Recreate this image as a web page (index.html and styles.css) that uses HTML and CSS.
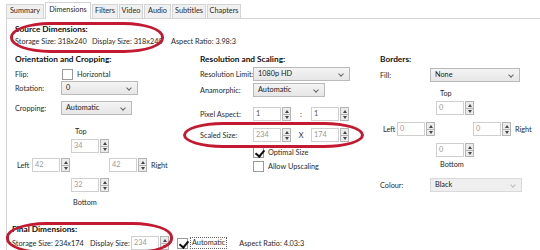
FILE: index.html
```html
<!DOCTYPE html>
<html lang="en">
<head>
  <meta charset="UTF-8">
  <title>Dimensions</title>
  <link rel="stylesheet" href="styles.css">
</head>
<body>
  <div class="page">
    <div class="tabs">
      <span class="tab tab-summary">Summary</span>
      <span class="tab tab-dimensions active">Dimensions</span>
      <span class="tab tab-filters">Filters</span>
      <span class="tab tab-video">Video</span>
      <span class="tab tab-audio">Audio</span>
      <span class="tab tab-subtitles">Subtitles</span>
      <span class="tab tab-chapters">Chapters</span>
    </div>

    <div class="panel">
      <section class="source">
        <h2>Source Dimensions:</h2>
        <div class="info">
          <span class="info-storage">Storage Size: 318x240</span>
          <span class="info-display">Display Size: 318x240</span>
          <span>Aspect Ratio: 3.98:3</span>
        </div>
      </section>

      <div class="columns">
        <section class="col col-orient">
          <h2>Orientation and Cropping:</h2>
          <div class="row row-flip">
            <span class="label">Flip:</span>
            <span class="check"></span>
            <span class="check-text">Horizontal</span>
          </div>
          <div class="row row-rotation">
            <span class="label">Rotation:</span>
            <span class="select select-rotation">0</span>
          </div>
          <div class="row row-cropping">
            <span class="label">Cropping:</span>
            <span class="select select-crop">Automatic</span>
          </div>
          <div class="crop">
            <div class="crop-top-label">Top</div>
            <div class="spin crop-top"><span class="spin-box">34</span><span class="spin-btns"><i class="up"></i><i class="down"></i></span></div>
            <div class="crop-mid">
              <span class="side-label">Left</span>
              <div class="spin spin-left"><span class="spin-box">42</span><span class="spin-btns"><i class="up"></i><i class="down"></i></span></div>
              <div class="spin spin-right"><span class="spin-box">42</span><span class="spin-btns"><i class="up"></i><i class="down"></i></span></div>
              <span class="side-label side-right">Right</span>
            </div>
            <div class="spin crop-bottom"><span class="spin-box">32</span><span class="spin-btns"><i class="up"></i><i class="down"></i></span></div>
            <div class="crop-bottom-label">Bottom</div>
          </div>
        </section>

        <section class="col col-res">
          <h2>Resolution and Scaling:</h2>
          <div class="row row-limit">
            <span class="label label-wide">Resolution Limit:</span>
            <span class="select select-limit">1080p HD</span>
          </div>
          <div class="row row-anam">
            <span class="label label-wide">Anamorphic:</span>
            <span class="select select-anam">Automatic</span>
          </div>
          <div class="row row-pixel">
            <span class="label label-wide">Pixel Aspect:</span>
            <div class="spin"><span class="spin-box dark">1</span><span class="spin-btns"><i class="up"></i><i class="down"></i></span></div>
            <span class="sep">:</span>
            <div class="spin"><span class="spin-box dark">1</span><span class="spin-btns"><i class="up"></i><i class="down"></i></span></div>
          </div>
          <div class="row row-scaled">
            <span class="label label-wide">Scaled Size:</span>
            <div class="spin"><span class="spin-box">234</span><span class="spin-btns"><i class="up"></i><i class="down"></i></span></div>
            <span class="sep">X</span>
            <div class="spin"><span class="spin-box">174</span><span class="spin-btns"><i class="up"></i><i class="down"></i></span></div>
          </div>
          <div class="row row-optimal">
            <span class="check checked"></span>
            <span class="check-text">Optimal Size</span>
          </div>
          <div class="row row-upscale">
            <span class="check"></span>
            <span class="check-text">Allow Upscaling</span>
          </div>
        </section>

        <section class="col col-borders">
          <h2>Borders:</h2>
          <div class="row row-fill">
            <span class="label label-fill">Fill:</span>
            <span class="select select-fill">None</span>
          </div>
          <div class="crop crop-borders">
            <div class="crop-top-label">Top</div>
            <div class="spin crop-top"><span class="spin-box">0</span><span class="spin-btns"><i class="up"></i><i class="down"></i></span></div>
            <div class="crop-mid">
              <span class="side-label">Left</span>
              <div class="spin spin-left"><span class="spin-box">0</span><span class="spin-btns"><i class="up"></i><i class="down"></i></span></div>
              <div class="spin spin-right"><span class="spin-box">0</span><span class="spin-btns"><i class="up"></i><i class="down"></i></span></div>
              <span class="side-label side-right">Right</span>
            </div>
            <div class="spin crop-bottom"><span class="spin-box">0</span><span class="spin-btns"><i class="up"></i><i class="down"></i></span></div>
            <div class="crop-bottom-label">Bottom</div>
          </div>
          <div class="row row-colour">
            <span class="label label-fill">Colour:</span>
            <span class="select select-colour disabled">Black</span>
          </div>
        </section>
      </div>

      <section class="final">
        <h2>Final Dimensions:</h2>
        <div class="final-row">
          <span class="final-storage">Storage Size: 234x174</span>
          <span class="final-display">Display Size:</span>
          <div class="spin"><span class="spin-box">234</span><span class="spin-btns"><i class="up"></i><i class="down"></i></span></div>
          <span class="check checked final-check"></span>
          <span class="check-text focus">Automatic</span>
          <span class="final-aspect">Aspect Ratio: 4.03:3</span>
        </div>
      </section>
    </div>

    <!-- hand-drawn annotations -->
    <div class="mark mark-source"></div>
    <div class="mark mark-scaled"></div>
    <div class="mark mark-final"></div>
  </div>
</body>
</html>
```

FILE: styles.css
```css
* {
  box-sizing: border-box;
}
body {
  margin: 0;
  background: #ffffff;
  font-family: Lato, "Open Sans", sans-serif;
  font-size: 7.3px;
  color: #2a2a2a;
  white-space: nowrap;
  overflow: hidden;
}
h2 {
  margin: 0;
  font-size: 8.3px;
  line-height: 12px;
  font-weight: 700;
  color: #111;
}
.page {
  position: relative;
  width: 540px;
  height: 250px;
  overflow: hidden;
}

/* tabs */
.tabs {
  display: flex;
  align-items: flex-end;
  height: 19px;
  margin-left: 6px;
  border-bottom: 1px solid #d4d4d4;
}
.tab {
  height: 14px;
  line-height: 12px;
  text-align: center;
  border: 1px solid #d4d4d4;
  border-bottom: none;
  background: #f0f0f0;
  color: #2a2a2a;
}
.tab + .tab {
  margin-left: 1px;
}
.tab.active {
  position: relative;
  height: 17px;
  margin-bottom: -1px;
  line-height: 13px;
  background: #fff;
  z-index: 1;
}
.tab-summary { width: 38px; }
.tab-dimensions { width: 46px; }
.tab-filters { width: 26px; }
.tab-video { width: 24px; }
.tab-audio { width: 27px; }
.tab-subtitles { width: 34px; }
.tab-chapters { width: 34px; }

/* panel */
.panel {
  margin-left: 6px;
  border-left: 1px solid #d4d4d4;
  padding: 4px 0 0 8px;
  height: 231px;
}
.info {
  display: flex;
  line-height: 12px;
  margin-top: 1px;
}
.info-storage {
  width: 77px;
}
.info-display {
  width: 79px;
}

.columns {
  display: flex;
  height: 170px;
  margin-top: 5px;
}
.col-orient {
  width: 185px;
}
.col-res {
  width: 180px;
}
.col-borders {
  flex: 1;
}

.row {
  display: flex;
  align-items: center;
  height: 14px;
}
.label {
  width: 46px;
}
.label-wide {
  width: 53px;
}
.label-fill {
  width: 50px;
}

/* controls */
.select {
  position: relative;
  height: 14px;
  line-height: 12px;
  padding-left: 4px;
  border: 1px solid #b9b9b9;
  background: linear-gradient(#f4f4f4, #e6e6e6);
  color: #1a1a1a;
}
.select::after {
  content: "";
  position: absolute;
  right: 6px;
  top: 4px;
  width: 3px;
  height: 3px;
  border-right: 1px solid #666;
  border-bottom: 1px solid #666;
  transform: rotate(45deg);
}
.select.disabled {
  border-color: #d9d9d9;
  background: #efefef;
}
.select.disabled::after {
  border-color: #bbb;
}
.select-rotation { width: 77px; }
.select-crop { width: 71px; }
.select-limit { width: 97px; }
.select-anam { width: 72px; }
.select-fill { width: 90px; }
.select-colour { width: 92px; }

.check {
  width: 11px;
  height: 11px;
  border: 1px solid #9a9a9a;
  background: #fff;
  position: relative;
}
.check.checked::after {
  content: "";
  position: absolute;
  left: 3px;
  top: 0px;
  width: 4px;
  height: 7px;
  border-right: 2px solid #111;
  border-bottom: 2px solid #111;
  transform: rotate(40deg);
}
.check-text {
  margin-left: 4px;
}

.spin {
  display: flex;
  height: 14px;
}
.spin-box {
  width: 28px;
  height: 14px;
  line-height: 12px;
  padding-left: 2px;
  border: 1px solid #cfcfcf;
  color: #9a9a9a;
}
.spin-box.dark {
  color: #555;
}
.spin-btns {
  display: flex;
  flex-direction: column;
  width: 9px;
  margin-left: 1px;
}
.spin-btns i {
  position: relative;
  flex: 1;
  border: 1px solid #b4b4b4;
  background: #ececec;
}
.spin-btns i + i {
  border-top: none;
}
.spin-btns i::after {
  content: "";
  position: absolute;
  left: 1.5px;
  border-left: 2.5px solid transparent;
  border-right: 2.5px solid transparent;
}
.spin-btns .up::after {
  top: 1.5px;
  border-bottom: 3px solid #444;
}
.spin-btns .down::after {
  top: 1px;
  border-top: 3px solid #444;
}

/* left column */
.row-flip {
  margin-top: 3px;
  height: 12px;
}
.row-flip .check {
  margin-left: 1px;
}
.row-rotation {
  margin-top: 1px;
}
.row-cropping {
  margin-top: 6px;
}
.crop {
  margin-top: 11px;
}
.crop-top-label {
  margin-left: 60px;
  line-height: 12px;
}
.crop .crop-top,
.crop .crop-bottom {
  margin-left: 56px;
}
.crop-top {
  margin-top: 1px;
}
.crop-mid {
  display: flex;
  align-items: center;
  margin-top: 5px;
}
.side-label {
  margin-left: 2px;
  width: 15px;
}
.spin-left {
  margin-right: 39px;
}
.side-right {
  margin-left: 4px;
}
.crop-bottom {
  margin-top: 6px;
}
.crop-bottom-label {
  margin-left: 58px;
  margin-top: 5px;
  line-height: 12px;
}

/* middle column */
.row-limit {
  margin-top: 2px;
}
.row-anam {
  margin-top: 2px;
}
.row-pixel {
  margin-top: 10px;
}
.row-scaled {
  margin-top: 7px;
}
.sep {
  width: 20px;
  text-align: center;
}
.row-optimal {
  margin-top: 5px;
  padding-left: 53px;
  height: 11px;
}
.row-upscale {
  margin-top: 3px;
  padding-left: 53px;
  height: 11px;
}

/* right column */
.row-fill {
  margin-top: 3px;
}
.crop-borders {
  margin-top: 6px;
}
.crop-borders .crop-top-label {
  margin-left: 60px;
}
.crop-borders .crop-top,
.crop-borders .crop-bottom {
  margin-left: 56px;
}
.crop-borders .crop-mid {
  margin-top: 7px;
}
.crop-borders .side-label {
  margin-left: 3px;
  width: 14px;
}
.crop-borders .spin-left {
  margin-right: 38px;
}
.crop-borders .side-right {
  margin-left: 4px;
}
.crop-borders .crop-bottom {
  margin-top: 7px;
}
.crop-borders .crop-bottom-label {
  margin-left: 60px;
  margin-top: 2px;
}
.row-colour {
  margin-top: 7px;
}

/* final dimensions */
.final {
  margin-left: -3px;
}
.final-row {
  display: flex;
  align-items: center;
  height: 14px;
  margin-top: 1px;
}
.final-storage {
  width: 78px;
}
.final-display {
  width: 41px;
}
.final-check {
  margin-left: 8px;
}
.focus {
  margin-left: 2px;
  padding: 0 1px;
  border: 1px dotted #666;
  line-height: 10px;
}
.final-aspect {
  margin-left: 12px;
}

/* red annotation rings */
.mark {
  position: absolute;
  border: 3px solid #c31a32;
  pointer-events: none;
}
.mark-source {
  left: 10px;
  top: 22px;
  width: 154px;
  height: 31px;
  border-radius: 40px / 15px;
}
.mark-scaled {
  left: 183px;
  top: 122px;
  width: 181px;
  height: 26px;
  border-radius: 40px / 13px;
}
.mark-final {
  left: 6px;
  top: 222px;
  width: 167px;
  height: 32px;
  border-radius: 40px / 15px;
}
```
